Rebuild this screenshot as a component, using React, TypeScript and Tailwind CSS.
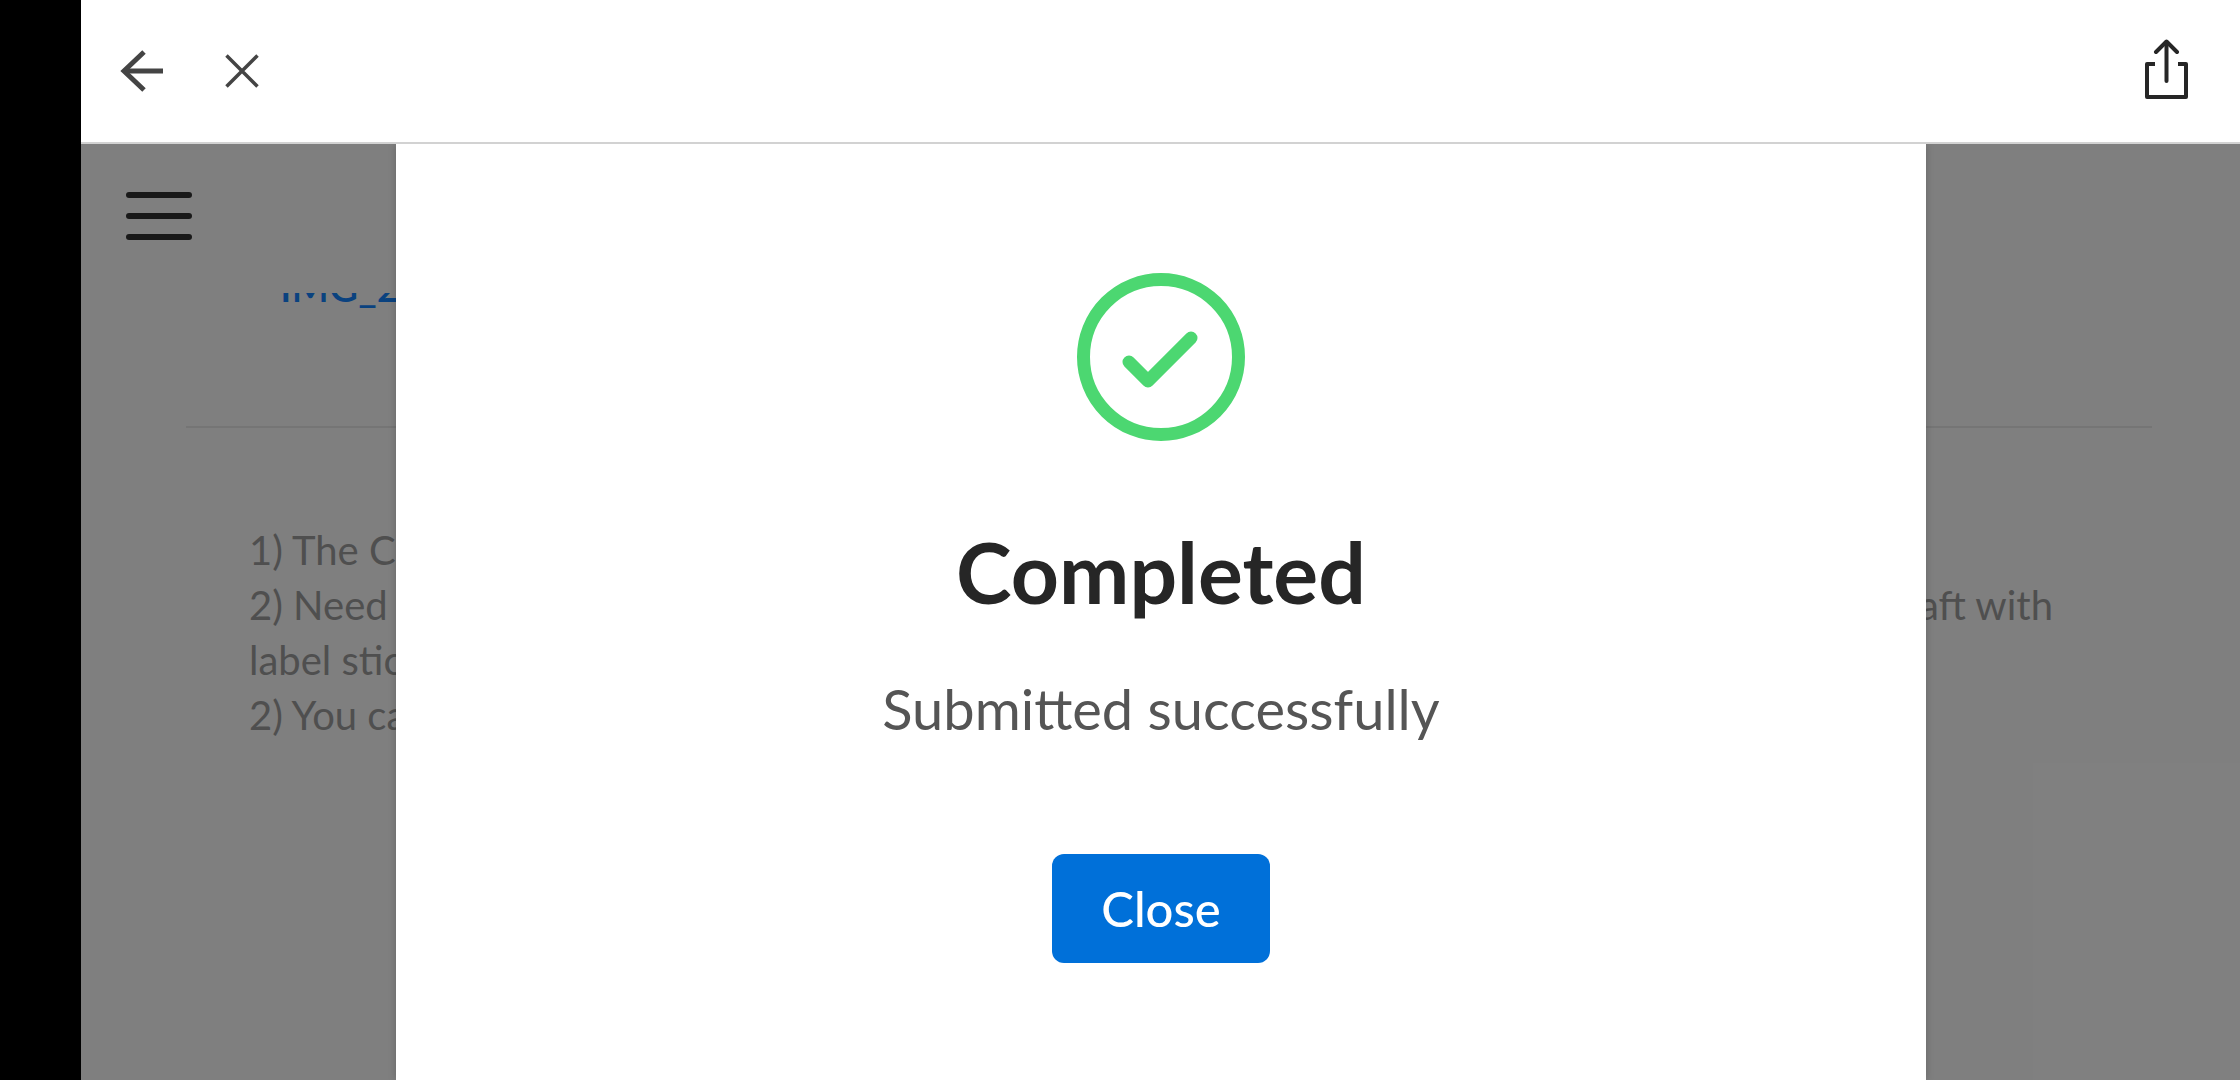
function BackIcon() {
  return (
    <svg width="44" height="46" viewBox="0 0 44 46" fill="none" stroke="#444444" className="block">
      <path d="M24 4 4 23l20 19" strokeWidth="5" />
      <path d="M6 23h37" strokeWidth="5" />
    </svg>
  );
}

function CloseIcon() {
  return (
    <svg width="34" height="34" viewBox="0 0 34 34" fill="none" stroke="#444444" strokeWidth="3.500" className="block">
      <path d="M1.500 1.500l31 31M32.500 1.500l-31 31" />
    </svg>
  );
}

function ShareIcon() {
  return (
    <svg width="43" height="60" viewBox="0 0 43 60" fill="none" stroke="#262626" strokeWidth="4" className="block">
      <path d="M21.500 3v39" strokeLinecap="round" />
      <path d="M11 13 21.500 2.500 32 13" strokeLinecap="round" strokeLinejoin="round" />
      <path d="M10 25H2v33h39V25h-8" strokeLinejoin="round" />
    </svg>
  );
}

function SuccessIcon() {
  return (
    <svg width="168" height="168" viewBox="0 0 168 168" fill="none" stroke="#4cd771" className="block">
      <circle cx="84" cy="84" r="77.500" strokeWidth="13" />
      <path d="M52 89l19 19 43-43" strokeWidth="13" strokeLinecap="round" strokeLinejoin="round" />
    </svg>
  );
}

export default function App() {
  return (
    <div className="flex h-[1080px] w-[2240px] overflow-hidden bg-black font-['Lato',sans-serif]">
      <div className="w-[81px] shrink-0" />
      <div className="flex min-w-0 flex-1 flex-col">
        <header className="flex h-[144px] shrink-0 items-center justify-between border-b-2 border-[#d2d2d2] bg-white pl-[39px] pr-[52px]">
          <div className="flex items-center gap-[61px]">
            <BackIcon />
            <CloseIcon />
          </div>
          <div className="mb-[4px]">
            <ShareIcon />
          </div>
        </header>

        <main className="relative flex-1 overflow-hidden bg-white">
          <div className="h-[149px] pl-[45px] pt-[48px]">
            <div className="flex w-[66px] flex-col gap-[15px]">
              <span className="h-[6px] rounded-full bg-[#333333]" />
              <span className="h-[6px] rounded-full bg-[#333333]" />
              <span className="h-[6px] rounded-full bg-[#333333]" />
            </div>
          </div>
          <div className="ml-[199px] h-[17px] overflow-hidden">
            <div className="-mt-[26px] text-[40px] font-semibold leading-[40px] text-[#1484ff]">IMG_2</div>
          </div>
          <div className="ml-[105px] mr-[88px] mt-[116px] h-[2px] bg-[#eaeaea]" />
          <div className="ml-[168px] mr-[187px] mt-[95px] text-[40px] leading-[55px] text-[#9e9e9e]">
            <p>1) The C</p>
            <p className="flex justify-between">
              <span>2) Need</span>
              <span>aft with</span>
            </p>
            <p>label stic</p>
            <p>2) You ca</p>
          </div>

          <div className="absolute inset-0 bg-black/50" />

          <section className="absolute bottom-0 left-[315px] top-0 flex w-[1530px] flex-col items-center bg-white pt-[129px] shadow-[0_0_8px_rgba(0,0,0,0.2)]">
            <SuccessIcon />
            <h1 className="mt-[81px] text-[84px] font-bold leading-[100px] text-[#262626]">Completed</h1>
            <p className="mt-[52px] text-[56px] leading-[70px] text-[#555555]">Submitted successfully</p>
            <button className="mt-[110px] h-[109px] w-[218px] rounded-[12px] bg-[#0070d9] text-[49px] font-medium text-white">Close</button>
          </section>
        </main>
      </div>
    </div>
  );
}
